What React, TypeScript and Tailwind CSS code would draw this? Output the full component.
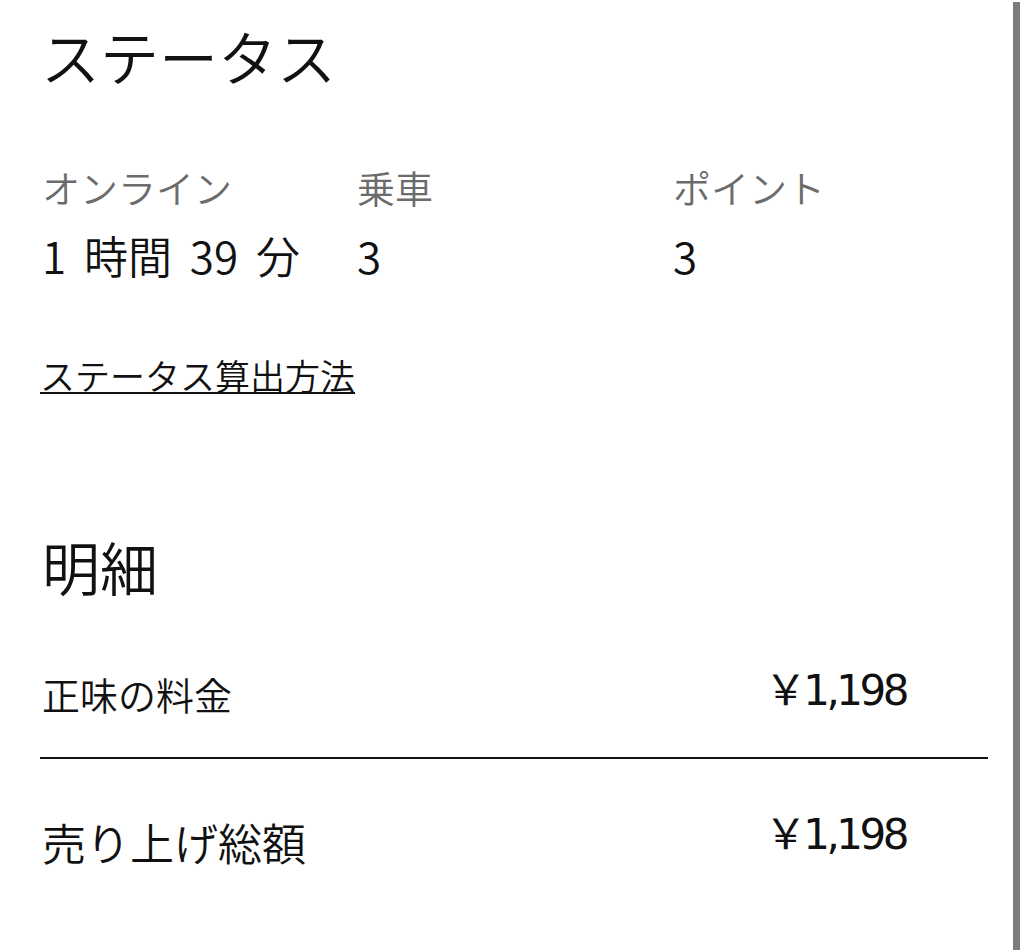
import React from 'react'

const jp = '[font-family:"Noto_Sans_CJK_JP","Noto_Sans",sans-serif]'

type Stat = { label: string; value: string }

const stats: Stat[] = [
  { label: 'オンライン', value: '1 時間 39 分' },
  { label: '乗車', value: '3' },
  { label: 'ポイント', value: '3' },
]

function Amount({ value, className }: { value: string; className: string }) {
  return (
    <span
      className={`text-[42px] font-normal leading-[42px] tracking-[-3.5px] text-[#111] [font-family:"DejaVu_Sans","Noto_Sans_CJK_JP",sans-serif] ${className}`}
    >
      {value}
    </span>
  )
}

export default function App() {
  return (
    <div className={`flex min-h-[950px] w-full bg-white font-[350] ${jp}`}>
      <main className="flex-1 pl-[40px] pr-[25px] pt-[26px]">
        <h1 className="pl-[1px] text-[59px] leading-[59px] text-[#111]">ステータス</h1>

        <div className="mt-[83px] grid grid-cols-[315px_316px_1fr] pl-[2px]">
          {stats.map((s) => (
            <div key={s.label} className="flex flex-col">
              <span className="text-[38px] leading-[38px] text-[#6b6b6b]">{s.label}</span>
              <span className="mt-[27px] text-[44px] leading-[44px] text-[#111] [word-spacing:8px]">
                {s.value}
              </span>
            </div>
          ))}
        </div>

        <div className="mt-[80px]">
          <a
            href="#"
            className="inline-block text-[35px] leading-[35px] text-[#111] underline decoration-2 underline-offset-[2px]"
          >
            ステータス算出方法
          </a>
        </div>

        <h2 className="mt-[142px] pl-[2px] text-[58px] leading-[58px] text-[#111]">明細</h2>

        <div className="mt-[80px] flex items-start justify-between pl-[2px] pr-[82px]">
          <span className="text-[38px] leading-[38px] text-[#111]">正味の料金</span>
          <Amount value="￥1,198" className="-mt-[5px]" />
        </div>

        <div className="mt-[44px] h-[2px] bg-[#111]" />

        <div className="mt-[61px] flex items-start justify-between pl-[2px] pr-[82px]">
          <span className="text-[44px] leading-[44px] text-[#111]">売り上げ総額</span>
          <Amount value="￥1,198" className="-mt-[6px]" />
        </div>
      </main>
      <div className="flex w-[11px] shrink-0">
        <div className="mt-[2px] w-[7px] bg-[#7d7d7d]" />
        <div className="w-[4px] bg-white" />
      </div>
    </div>
  )
}
